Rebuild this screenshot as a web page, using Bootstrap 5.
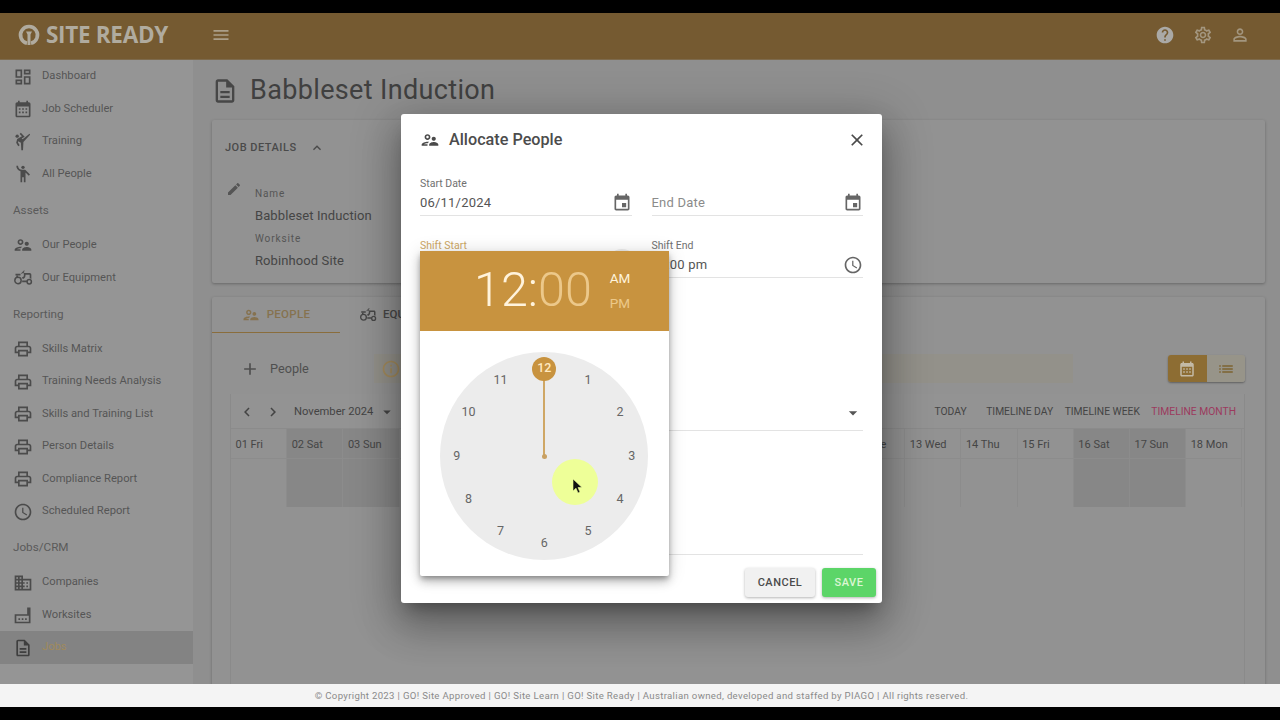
<!DOCTYPE html>
<html lang="en">
<head>
    <meta charset="UTF-8">
    <meta name="viewport" content="width=device-width, initial-scale=1.0">
    <title>Allocate People</title>
    <link rel="stylesheet" href="https://cdn.jsdelivr.net/npm/bootstrap@5.3.0/dist/css/bootstrap.min.css">
    <style>
        html, body { height: 100%; }
        body { background: #000; font-family: Roboto, "Liberation Sans", sans-serif; color: #474747; overflow: hidden; }
        .frame { position: relative; height: 720px; padding: 13px 0; }
        .app { height: 694px; display: flex; flex-direction: column; background: #909090; }
        svg.ico { width: 20px; height: 20px; fill: currentColor; flex: none; display: block; }

        .top-bar { height: 47px; padding: 0 0 3px; background: #755a31; flex-wrap: nowrap; border-bottom: 1px solid #7d6a4c; }
        .logo { display: flex; align-items: center; margin-left: 17px; width: 194px; color: #b0ab9f; }
        .logo svg { width: 24px; height: 24px; flex: none; }
        .logo span { font-family: "Open Sans", sans-serif; font-weight: 700; font-size: 22.5px; letter-spacing: -.3px; margin-left: 5px; }
        .top-btn { color: #ab9f89; }
        .top-right { color: #a3967f; gap: 17.5px; margin-right: 30px; }
        .top-right svg.ico { width: 20px; height: 20px; }
        .top-right svg.ico:first-child { color: #aaa9a6; }

        .work { flex: 1; display: flex; min-height: 0; }
        .side { width: 193px; flex: none; background: #959595; box-shadow: 1px 0 3px rgba(0,0,0,.12); font-size: 11.2px; color: #555; }
        .side-row { height: 32.5px; padding: 1px 0 0 12.5px; gap: 9.5px; }
        .side-row svg { color: #4b4b4b; }
        .side-row.is-on { background: #838383; color: #a08a5c; }
        .side-row.is-on svg { color: #3f3f3f; }
        .side-head { height: 38.7px; padding: 3px 0 0 13px; color: #5a5a5a; font-size: 11.7px; }

        .main { flex: 1; min-width: 0; padding: 13px 15px 0 19px; overflow: hidden; background: #8f8f8f; }
        .page-title { height: 35px; margin: 0 0 12px; gap: 11px; }
        .page-title svg.ico { width: 28px; height: 28px; margin-left: -1px; }
        .page-title h1 { font-size: 27px; font-weight: 400; letter-spacing: .35px; margin: 0; color: #404040; }
        .sheet { background: #929292; border: 0; border-radius: 2px; box-shadow: 0 1px 3px rgba(0,0,0,.28); }
        .job-card { height: 163px; padding: 20px 13px; margin-bottom: 14px; }
        .job-head { font-size: 11px; font-weight: 500; letter-spacing: .5px; gap: 8px; color: #4a4a4a; height: 18px; }
        .job-head svg.ico { width: 16px; height: 16px; }
        .job-info { margin-top: 31px; gap: 13px; }
        .job-info svg.ico { width: 16px; height: 16px; margin: -7px 0 0 1px; color: #555; }
        .job-lab { font-size: 10px; letter-spacing: .9px; line-height: 12px; color: #555; }
        .job-val { font-size: 13px; letter-spacing: .1px; line-height: 16px; margin: 8px 0 9px; color: #454545; }

        .tabs-card { height: 500px; }
        .tab-row { height: 36px; }
        .tab-on { width: 128px; height: 36px; justify-content: center; gap: 7px; font-size: 11.5px; font-weight: 500; letter-spacing: .3px; color: #86724f; border-bottom: 1px solid #8a6d3c; }
        .tab-on svg.ico { width: 18px; height: 18px; }
        .tab-off { margin-left: 19px; gap: 6px; font-size: 11.5px; font-weight: 500; color: #474747; }
        .tab-off svg.ico { width: 18px; height: 18px; }
        .tool-row { height: 29px; margin: 21px 20px 11px 26px; }
        .add-people { width: 136px; gap: 10px; font-size: 12.7px; color: #4f4f4f; }
        .add-people svg.ico { width: 20px; height: 20px; margin-left: 2px; }
        .hint-strip { width: 699px; height: 29px; padding-left: 7px; background: #93918a; color: #a58c5c; }
        .hint-strip svg.ico { width: 20px; height: 20px; }
        .view-btns { margin-left: auto; height: 27px; width: 77px; border-radius: 3px; box-shadow: 0 1px 2px rgba(0,0,0,.35); overflow: hidden; }
        .view-btns div { flex: 1; }
        .view-on { background: #8d6d33; color: #c3baa6; }
        .view-off { background: #979489; color: #7d6330; }
        .view-btns svg.ico { width: 18px; height: 18px; }

        .cal { margin: 0 20px 0 18px; height: 300px; border-left: 1px solid #8a8a8a; border-right: 1px solid #8a8a8a; }
        .cal-tools { height: 35px; padding: 2px 8px 0 7px; background: #939393; font-size: 10.3px; color: #444; border-bottom: 1px solid #8b8b8b; }
        .cal-tools svg.ico { width: 18px; height: 18px; }
        .cal-month { font-size: 11.2px; margin-left: 12px; }
        .cal-caret { margin-left: 5px; }
        .cal-links { margin-left: auto; gap: 11.5px; }
        .cal-red { color: #9c3a5e; }
        .cal-grid { display: grid; grid-template-columns: repeat(18, 56.2px); }
        .cal-top, .cal-low { height: 30px; padding: 4px 0 0 4.5px; font-size: 11px; color: #454545; border-right: 1px solid #8c8c8c; border-bottom: 1px solid #8c8c8c; display: flex; align-items: center; }
        .cal-low { height: 48px; border-bottom: 0; }
        .is-end { background: #878787; }

        .foot { height: 23px; padding-left: 3px; background: #f4f4f4; text-align: center; font-size: 9.6px; letter-spacing: .33px; line-height: 24px; color: #8a8a8a; flex: none; }

        .dialog { position: absolute; left: 401px; top: 114px; width: 481px; height: 489px; background: #fff; border: 0; border-radius: 3px; box-shadow: 0 11px 15px -7px rgba(0,0,0,.3), 0 24px 38px 3px rgba(0,0,0,.2), 0 9px 46px 8px rgba(0,0,0,.2); color: #474747; }
        .dlg-head { height: 52px; margin-bottom: 10px; padding: 0 15px 0 19px; gap: 9px; }
        .dlg-head svg.ico { width: 20px; height: 20px; color: #4a4a4a; }
        .dlg-head h5 { font-size: 16.2px; font-weight: 500; margin: 0; color: #4c4c4c; }
        .dlg-close { margin-left: auto; color: #555; }
        .dlg-body { padding: 0 19px; }
        .dlg-row { gap: 20px; margin-bottom: 22px; }
        .fld { flex: 1; height: 40px; padding-top: 1px; border-bottom: 1px solid #e3e3e3; position: relative; }
        .fld label { display: block; font-size: 10.5px; line-height: 14px; color: #707070; margin: 0; }
        .fld label.is-gold { color: #cda765; }
        .fld-val { font-size: 13px; letter-spacing: .2px; line-height: 24px; color: #555; }
        .fld-val.is-empty { color: #8b8b8b; }
        .fld svg.ico { position: absolute; right: 0; top: 17px; width: 20px; height: 20px; color: #666; }
        .fld-bump { position: absolute; right: -6px; top: 11px; width: 32px; height: 32px; border-radius: 50%; background: #eee; }
        .fld-wide { height: 40px; margin: 113px 0 0; border-bottom: 1px solid #e3e3e3; position: relative; }
        .fld-wide svg.ico { position: absolute; right: 0; top: 12px; width: 20px; height: 20px; color: #555; }
        .fld-area { height: 124px; border-bottom: 1px solid #e3e3e3; }
        .dlg-foot { padding: 13px 6px 0 0; justify-content: flex-end; gap: 7px; }
        .dlg-foot .btn { height: 29px; padding: 1px 0 0; font-size: 11px; font-weight: 500; letter-spacing: .5px; border: 0; border-radius: 3px; box-shadow: 0 1px 3px rgba(0,0,0,.3); }
        .btn-cancel { width: 70px; background: #f1f1f1; color: #4b4b4b; }
        .btn-save { width: 54px; background: #5cd568; color: #dcf6d4; }

        .picker { position: absolute; left: 19px; top: 137px; width: 248.5px; height: 325px; background: #fff; box-shadow: 0 3px 5px -1px rgba(0,0,0,.3), 0 6px 10px rgba(0,0,0,.2), 0 1px 18px rgba(0,0,0,.15); border-radius: 2px; }
        .pick-head { height: 80px; padding: 0 0 1px 54px; background: #c8933f; color: #fff3dc; }
        .pick-time { font-size: 48.5px; font-weight: 300; line-height: 1; }
        .pick-time span { color: #ecc88a; }
        .pick-ampm { margin-left: 18px; font-size: 13.5px; line-height: 25px; font-weight: 400; }
        .pick-ampm span { display: block; color: #ecc88a; }
        .clock { position: relative; width: 208px; height: 208px; margin: 21px auto 0; background: #ececec; border-radius: 50%; font-size: 12.5px; color: #666; }
        .clock-num { position: absolute; width: 24px; height: 24px; margin: -12px 0 0 -12px; display: flex; align-items: center; justify-content: center; }
        .clock-sel { background: #c8933f; color: #ffe9c0; border-radius: 50%; font-weight: 500; }
        .clock-hand { position: absolute; left: 103px; top: 16px; width: 2px; height: 88px; background: #cfa765; }
        .clock-pin { position: absolute; left: 101.5px; top: 101.5px; width: 5px; height: 5px; border-radius: 50%; background: #c8a063; }
        .mouse-halo { position: absolute; left: 552px; top: 459px; width: 46px; height: 46px; border-radius: 50%; background: #eeff98; }
        .mouse-arrow { position: absolute; left: 572px; top: 478px; width: 11px; height: 17px; }
    </style>
</head>
<body>
    <svg width="0" height="0" class="position-absolute">
        <symbol id="i-dash" viewBox="0 0 24 24"><path d="M19 5v2h-4V5h4M9 5v6H5V5h4m10 8v6h-4v-6h4M9 17v2H5v-2h4M21 3h-8v6h8V3zM11 3H3v10h8V3zm10 8h-8v10h8V11zm-10 4H3v6h8v-6z"/></symbol>
        <symbol id="i-sched" viewBox="0 0 24 24"><path d="M19 4h-1V2h-2v2H8V2H6v2H5c-1.1 0-2 .9-2 2v14c0 1.1.9 2 2 2h14c1.1 0 2-.9 2-2V6c0-1.1-.9-2-2-2zm0 16H5V9h14v11zM7 11h2v2H7zm4 0h2v2h-2zm4 0h2v2h-2zm-8 4h2v2H7zm4 0h2v2h-2zm4 0h2v2h-2z"/></symbol>
        <symbol id="i-event" viewBox="0 0 24 24"><path d="M17 12h-5v5h5v-5zM16 1v2H8V1H6v2H5c-1.11 0-1.99.9-1.99 2L3 19c0 1.1.89 2 2 2h14c1.1 0 2-.9 2-2V5c0-1.1-.9-2-2-2h-1V1h-2zm3 18H5V8h14v11z"/></symbol>
        <symbol id="i-kick" viewBox="0 0 24 24"><path d="M19.8 2l-8.2 6.7-1.21-1.04 3.6-2.08L9.41 1 8 2.41l2.74 2.74L5 8.46l-1.19 4.29L6.27 17 8 16l-2.03-3.52.35-1.3L9.5 13l.5 9h2l.5-10 8-8.6z"/><circle cx="5" cy="5" r="2"/></symbol>
        <symbol id="i-wave" viewBox="0 0 24 24"><circle cx="12" cy="4" r="2"/><path d="M15.89 8.11C15.5 7.72 14.83 7 13.53 7h-2.54C8.24 6.99 6 4.75 6 2H4c0 3.16 2.11 5.84 5 6.71V22h2v-6h2v6h2V10.05L18.95 14l1.41-1.41-4.47-4.48z"/></symbol>
        <symbol id="i-people" viewBox="0 0 24 24"><path d="M9 12c1.93 0 3.5-1.57 3.5-3.5S10.93 5 9 5 5.5 6.57 5.5 8.5 7.07 12 9 12zm0-5c.83 0 1.5.67 1.5 1.5S9.83 10 9 10s-1.5-.67-1.5-1.5S8.17 7 9 7zm.05 10H4.77c.99-.5 2.7-1 4.23-1 .11 0 .23.01.34.01.34-.73.93-1.33 1.64-1.81-.73-.13-1.42-.2-1.98-.2-2.34 0-7 1.17-7 3.5V19h7v-1.5c0-.17.02-.34.05-.5zm7.45-2.5c-1.84 0-5.5 1.01-5.5 3V19h11v-1.5c0-1.99-3.66-3-5.5-3zm1.21-1.82c.76-.43 1.29-1.24 1.29-2.18C19 9.12 17.88 8 16.5 8S14 9.12 14 10.5c0 .94.53 1.75 1.29 2.18.36.2.77.32 1.21.32s.85-.12 1.21-.32z"/></symbol>
        <symbol id="i-tractor" viewBox="0 0 24 24"><path d="M20 6h-6.29l-1.06-1.06 1.41-1.41-.71-.71-3.53 3.53.71.71 1.41-1.41L13 6.71V9c0 1.1-.9 2-2 2h-.54c.57.64 1.01 1.39 1.28 2.22C13.06 13.06 15 11.58 15 9V8h5v4.3c.72.15 1.4.44 2 .84V8c0-1.1-.9-2-2-2zM3 7h6v2H3z"/><circle cx="19.5" cy="16.5" r="2.6" fill="none" stroke="currentColor" stroke-width="1.8"/><circle cx="6" cy="15" r="3.8" fill="none" stroke="currentColor" stroke-width="1.8"/><path d="M4 9h2v3H4zM11 15h6v2h-6z"/></symbol>
        <symbol id="i-print" viewBox="0 0 24 24"><path d="M19 8h-1V3H6v5H5c-1.66 0-3 1.34-3 3v6h4v4h12v-4h4v-6c0-1.66-1.34-3-3-3zM8 5h8v3H8V5zm8 12v2H8v-4h8v2zm2-2v-2H6v2H4v-4c0-.55.45-1 1-1h14c.55 0 1 .45 1 1v4h-2z"/></symbol>
        <symbol id="i-clock" viewBox="0 0 24 24"><path d="M11.99 2C6.47 2 2 6.48 2 12s4.47 10 9.99 10C17.52 22 22 17.52 22 12S17.52 2 11.99 2zM12 20c-4.42 0-8-3.58-8-8s3.58-8 8-8 8 3.58 8 8-3.58 8-8 8zm.5-13H11v6l5.25 3.15.75-1.23-4.5-2.67z"/></symbol>
        <symbol id="i-biz" viewBox="0 0 24 24"><path d="M12 7V3H2v18h20V7H12zM6 19H4v-2h2v2zm0-4H4v-2h2v2zm0-4H4V9h2v2zm0-4H4V5h2v2zm4 12H8v-2h2v2zm0-4H8v-2h2v2zm0-4H8V9h2v2zm0-4H8V5h2v2zm10 12h-8v-2h2v-2h-2v-2h2v-2h-2V9h8v10zm-2-8h-2v2h2v-2zm0 4h-2v2h2v-2z"/></symbol>
        <symbol id="i-factory" viewBox="0 0 24 24"><path fill-rule="evenodd" d="M17 3h4v19H2V11h15zM4 13v7h15V13z"/><path d="M6.500 16h2v2h-2zm4 0h2v2h-2zm4 0h2v2h-2z"/></symbol>
        <symbol id="i-doc" viewBox="0 0 24 24"><path d="M8 16h8v2H8zm0-4h8v2H8zm6-10H6c-1.1 0-2 .9-2 2v16c0 1.1.89 2 1.99 2H18c1.1 0 2-.9 2-2V8l-6-6zm4 18H6V4h7v5h5v11z"/></symbol>
        <symbol id="i-help" viewBox="0 0 24 24"><path d="M12 2C6.48 2 2 6.48 2 12s4.48 10 10 10 10-4.48 10-10S17.52 2 12 2zm1 17h-2v-2h2v2zm2.07-7.75l-.9.92C13.45 12.9 13 13.5 13 15h-2v-.5c0-1.1.45-2.1 1.17-2.83l1.24-1.26c.37-.36.59-.86.59-1.41 0-1.1-.9-2-2-2s-2 .9-2 2H8c0-2.21 1.79-4 4-4s4 1.79 4 4c0 .88-.36 1.68-.93 2.25z"/></symbol>
        <symbol id="i-gear" viewBox="0 0 24 24"><path d="M19.43 12.98c.04-.32.07-.64.07-.98 0-.34-.03-.66-.07-.98l2.11-1.65c.19-.15.24-.42.12-.64l-2-3.46c-.09-.16-.26-.25-.44-.25-.06 0-.12.01-.17.03l-2.49 1c-.52-.4-1.08-.73-1.69-.98l-.38-2.65C14.46 2.18 14.25 2 14 2h-4c-.25 0-.46.18-.49.42l-.38 2.65c-.61.25-1.17.59-1.69.98l-2.49-1c-.06-.02-.12-.03-.18-.03-.17 0-.34.09-.43.25l-2 3.46c-.13.22-.07.49.12.64l2.11 1.65c-.04.32-.07.65-.07.98 0 .33.03.66.07.98l-2.11 1.65c-.19.15-.24.42-.12.64l2 3.46c.09.16.26.25.44.25.06 0 .12-.01.17-.03l2.49-1c.52.4 1.08.73 1.69.98l.38 2.65c.03.24.24.42.49.42h4c.25 0 .46-.18.49-.42l.38-2.65c.61-.25 1.17-.59 1.69-.98l2.49 1c.06.02.12.03.18.03.17 0 .34-.09.43-.25l2-3.46c.12-.22.07-.49-.12-.64l-2.11-1.65zm-1.98-1.71c.04.31.05.52.05.73 0 .21-.02.43-.05.73l-.14 1.13.89.7 1.08.84-.7 1.21-1.27-.51-1.04-.42-.9.68c-.43.32-.84.56-1.25.73l-1.06.43-.16 1.13-.2 1.35h-1.4l-.19-1.35-.16-1.13-1.06-.43c-.43-.18-.83-.41-1.23-.71l-.91-.7-1.06.43-1.27.51-.7-1.21 1.08-.84.89-.7-.14-1.13c-.03-.31-.05-.54-.05-.74s.02-.43.05-.73l.14-1.13-.89-.7-1.08-.84.7-1.21 1.27.51 1.04.42.9-.68c.43-.32.84-.56 1.25-.73l1.06-.43.16-1.13.2-1.35h1.39l.19 1.35.16 1.13 1.06.43c.43.18.83.41 1.23.71l.91.7 1.06-.43 1.27-.51.7 1.21-1.07.85-.89.7.14 1.13zM12 8c-2.21 0-4 1.79-4 4s1.79 4 4 4 4-1.79 4-4-1.79-4-4-4zm0 6c-1.1 0-2-.9-2-2s.9-2 2-2 2 .9 2 2-.9 2-2 2z"/></symbol>
        <symbol id="i-user" viewBox="0 0 24 24"><path d="M12 5.9c1.16 0 2.1.94 2.1 2.1s-.94 2.1-2.1 2.1S9.9 9.16 9.9 8s.94-2.1 2.1-2.1m0 9c2.97 0 6.1 1.46 6.1 2.1v1.1H5.9V17c0-.64 3.13-2.1 6.1-2.1M12 4C9.79 4 8 5.79 8 8s1.79 4 4 4 4-1.79 4-4-1.79-4-4-4zm0 9c-2.67 0-8 1.34-8 4v3h16v-3c0-2.66-5.33-4-8-4z"/></symbol>
        <symbol id="i-menu" viewBox="0 0 24 24"><path d="M3 18h18v-2H3v2zm0-5h18v-2H3v2zm0-7v2h18V6H3z"/></symbol>
        <symbol id="i-close" viewBox="0 0 24 24"><path d="M19 6.41L17.59 5 12 10.59 6.41 5 5 6.41 10.59 12 5 17.59 6.41 19 12 13.41 17.59 19 19 17.59 13.41 12z"/></symbol>
        <symbol id="i-edit" viewBox="0 0 24 24"><path d="M3 17.25V21h3.75L17.81 9.94l-3.75-3.75L3 17.25zM20.71 7.04c.39-.39.39-1.02 0-1.41l-2.34-2.34c-.39-.39-1.02-.39-1.41 0l-1.83 1.83 3.75 3.75 1.83-1.83z"/></symbol>
        <symbol id="i-up" viewBox="0 0 24 24"><path d="M12 8l-6 6 1.41 1.41L12 10.83l4.59 4.58L18 14z"/></symbol>
        <symbol id="i-add" viewBox="0 0 24 24"><path d="M19 13h-6v6h-2v-6H5v-2h6V5h2v6h6v2z"/></symbol>
        <symbol id="i-info" viewBox="0 0 24 24"><path d="M11 7h2v2h-2zm0 4h2v6h-2zm1-9C6.48 2 2 6.48 2 12s4.48 10 10 10 10-4.48 10-10S17.52 2 12 2zm0 18c-4.41 0-8-3.59-8-8s3.59-8 8-8 8 3.59 8 8-3.59 8-8 8z"/></symbol>
        <symbol id="i-left" viewBox="0 0 24 24"><path d="M15.41 7.41L14 6l-6 6 6 6 1.41-1.41L10.83 12z"/></symbol>
        <symbol id="i-right" viewBox="0 0 24 24"><path d="M10 6L8.59 7.41 13.17 12l-4.58 4.59L10 18l6-6z"/></symbol>
        <symbol id="i-list" viewBox="0 0 24 24"><path d="M3 13h2v-2H3v2zm0 4h2v-2H3v2zm0-8h2V7H3v2zm4 4h14v-2H7v2zm0 4h14v-2H7v2zM7 7v2h14V7H7z"/></symbol>
        <symbol id="i-caret" viewBox="0 0 24 24"><path d="M7 10l5 5 5-5z"/></symbol>
    </svg>

    <div class="frame">
        <div class="app">
            <!-- Top bar -->
            <nav class="navbar top-bar flex-shrink-0">
                <div class="logo">
                    <svg viewBox="0 0 24 24"><path d="M10 20.300A8.500 8.500 0 1 1 14 20.300" fill="none" stroke="currentColor" stroke-width="3.600"/><path d="M9 8.500h6l-1.500 3V22h-3V11.500z" fill="currentColor"/></svg>
                    <span>SITE READY</span>
                </div>
                <div class="top-btn me-auto"><svg class="ico"><use href="#i-menu"/></svg></div>
                <div class="top-right d-flex align-items-center">
                    <svg class="ico"><use href="#i-help"/></svg>
                    <svg class="ico"><use href="#i-gear"/></svg>
                    <svg class="ico"><use href="#i-user"/></svg>
                </div>
            </nav>

            <div class="work">
                <!-- Sidebar -->
                <aside class="side">
                    <div class="side-row d-flex align-items-center"><svg class="ico"><use href="#i-dash"/></svg>Dashboard</div>
                    <div class="side-row d-flex align-items-center"><svg class="ico"><use href="#i-sched"/></svg>Job Scheduler</div>
                    <div class="side-row d-flex align-items-center"><svg class="ico"><use href="#i-kick"/></svg>Training</div>
                    <div class="side-row d-flex align-items-center"><svg class="ico"><use href="#i-wave"/></svg>All People</div>
                    <div class="side-head d-flex align-items-center">Assets</div>
                    <div class="side-row d-flex align-items-center"><svg class="ico"><use href="#i-people"/></svg>Our People</div>
                    <div class="side-row d-flex align-items-center"><svg class="ico"><use href="#i-tractor"/></svg>Our Equipment</div>
                    <div class="side-head d-flex align-items-center">Reporting</div>
                    <div class="side-row d-flex align-items-center"><svg class="ico"><use href="#i-print"/></svg>Skills Matrix</div>
                    <div class="side-row d-flex align-items-center"><svg class="ico"><use href="#i-print"/></svg>Training Needs Analysis</div>
                    <div class="side-row d-flex align-items-center"><svg class="ico"><use href="#i-print"/></svg>Skills and Training List</div>
                    <div class="side-row d-flex align-items-center"><svg class="ico"><use href="#i-print"/></svg>Person Details</div>
                    <div class="side-row d-flex align-items-center"><svg class="ico"><use href="#i-print"/></svg>Compliance Report</div>
                    <div class="side-row d-flex align-items-center"><svg class="ico"><use href="#i-clock"/></svg>Scheduled Report</div>
                    <div class="side-head d-flex align-items-center">Jobs/CRM</div>
                    <div class="side-row d-flex align-items-center"><svg class="ico"><use href="#i-biz"/></svg>Companies</div>
                    <div class="side-row d-flex align-items-center"><svg class="ico"><use href="#i-factory"/></svg>Worksites</div>
                    <div class="side-row is-on d-flex align-items-center"><svg class="ico"><use href="#i-doc"/></svg>Jobs</div>
                </aside>

                <!-- Main -->
                <main class="main">
                    <div class="page-title d-flex align-items-center">
                        <svg class="ico"><use href="#i-doc"/></svg>
                        <h1>Babbleset Induction</h1>
                    </div>

                    <div class="card sheet job-card">
                        <div class="job-head d-flex align-items-center">JOB DETAILS <svg class="ico ms-1"><use href="#i-up"/></svg></div>
                        <div class="job-info d-flex">
                            <svg class="ico"><use href="#i-edit"/></svg>
                            <div>
                                <div class="job-lab">Name</div>
                                <div class="job-val">Babbleset Induction</div>
                                <div class="job-lab">Worksite</div>
                                <div class="job-val">Robinhood Site</div>
                            </div>
                        </div>
                    </div>

                    <div class="card sheet tabs-card">
                        <div class="tab-row d-flex align-items-center">
                            <div class="tab-on d-flex align-items-center"><svg class="ico"><use href="#i-people"/></svg>PEOPLE</div>
                            <div class="tab-off d-flex align-items-center"><svg class="ico"><use href="#i-tractor"/></svg>EQUIPMENT</div>
                        </div>
                        <div class="tool-row d-flex align-items-center">
                            <div class="add-people d-flex align-items-center flex-shrink-0"><svg class="ico"><use href="#i-add"/></svg>People</div>
                            <div class="hint-strip d-flex align-items-center flex-shrink-0"><svg class="ico"><use href="#i-info"/></svg></div>
                            <div class="view-btns d-flex">
                                <div class="view-on d-flex align-items-center justify-content-center"><svg class="ico"><use href="#i-sched"/></svg></div>
                                <div class="view-off d-flex align-items-center justify-content-center"><svg class="ico"><use href="#i-list"/></svg></div>
                            </div>
                        </div>
                        <div class="cal">
                            <div class="cal-tools d-flex align-items-center">
                                <svg class="ico"><use href="#i-left"/></svg>
                                <svg class="ico ms-2"><use href="#i-right"/></svg>
                                <span class="cal-month">November 2024</span>
                                <svg class="ico cal-caret"><use href="#i-caret"/></svg>
                                <div class="cal-links d-flex align-items-center">
                                    <span class="me-2">TODAY</span>
                                    <span>TIMELINE DAY</span>
                                    <span>TIMELINE WEEK</span>
                                    <span class="cal-red">TIMELINE MONTH</span>
                                </div>
                            </div>
                            <div class="cal-grid" id="calGrid"></div>
                        </div>
                    </div>
                </main>
            </div>

            <footer class="foot">© Copyright 2023 | GO! Site Approved | GO! Site Learn | GO! Site Ready | Australian owned, developed and staffed by PIAGO | All rights reserved.</footer>
        </div>

        <!-- Allocate People dialog -->
        <div class="card dialog">
            <div class="dlg-head d-flex align-items-center">
                <svg class="ico"><use href="#i-people"/></svg>
                <h5>Allocate People</h5>
                <svg class="ico dlg-close"><use href="#i-close"/></svg>
            </div>
            <div class="dlg-body">
                <div class="dlg-row d-flex">
                    <div class="fld"><label>Start Date</label><div class="fld-val">06/11/2024</div><svg class="ico"><use href="#i-event"/></svg></div>
                    <div class="fld"><label>&nbsp;</label><div class="fld-val is-empty">End Date</div><svg class="ico"><use href="#i-event"/></svg></div>
                </div>
                <div class="d-flex dlg-row mb-0">
                    <div class="fld"><label class="is-gold">Shift Start</label><span class="fld-bump"></span><svg class="ico"><use href="#i-clock"/></svg></div>
                    <div class="fld"><label>Shift End</label><div class="fld-val">12:00 pm</div><svg class="ico"><use href="#i-clock"/></svg></div>
                </div>
                <div class="fld-wide"><svg class="ico"><use href="#i-caret"/></svg></div>
                <div class="fld-area"></div>
            </div>
            <div class="dlg-foot d-flex">
                <button type="button" class="btn btn-cancel">CANCEL</button>
                <button type="button" class="btn btn-save">SAVE</button>
            </div>

            <!-- Time picker -->
            <div class="picker">
                <div class="pick-head d-flex align-items-center">
                    <div class="pick-time">12:<span>00</span></div>
                    <div class="pick-ampm">AM<span>PM</span></div>
                </div>
                <div class="clock" id="clock">
                    <div class="clock-hand"></div>
                    <div class="clock-pin"></div>
                </div>
            </div>
        </div>

        <div class="mouse-halo"></div>
        <svg class="mouse-arrow" viewBox="0 0 11 17"><path d="M1 1v12l3-2.800 2 4.800 2-.9-2-4.600h4z" fill="#111" stroke="#eeff98" stroke-width=".6"/></svg>
    </div>

    <script>
        // Clock numbers, laid out round the dial
        const clockEl = document.getElementById("clock");
        for (let h = 1; h <= 12; h++) {
            const a = h * Math.PI / 6;
            const num = document.createElement("div");
            num.className = "clock-num" + (h === 12 ? " clock-sel" : "");
            num.textContent = h;
            num.style.left = (104 + 87.5 * Math.sin(a)) + "px";
            num.style.top = (104 - 87.5 * Math.cos(a)) + "px";
            clockEl.appendChild(num);
        }

        // Timeline month cells, days 4-11 sit behind the dialog so they stay empty
        const dayNames = ["Sun", "Mon", "Tue", "Wed", "Thu", "Fri", "Sat"];
        let headCells = "", lowCells = "";
        for (let d = 1; d <= 18; d++) {
            const wd = (d + 4) % 7;
            const end = wd === 0 || wd === 6 ? " is-end" : "";
            const label = d >= 4 && d <= 11 ? "" : `${String(d).padStart(2, "0")} ${dayNames[wd]}`;
            headCells += `<div class="cal-top${end}">${label}</div>`;
            lowCells += `<div class="cal-low${end}"></div>`;
        }
        document.getElementById("calGrid").innerHTML = headCells + lowCells;
    </script>
    <script src="https://cdn.jsdelivr.net/npm/bootstrap@5.3.0/dist/js/bootstrap.bundle.min.js"></script>
</body>
</html>
